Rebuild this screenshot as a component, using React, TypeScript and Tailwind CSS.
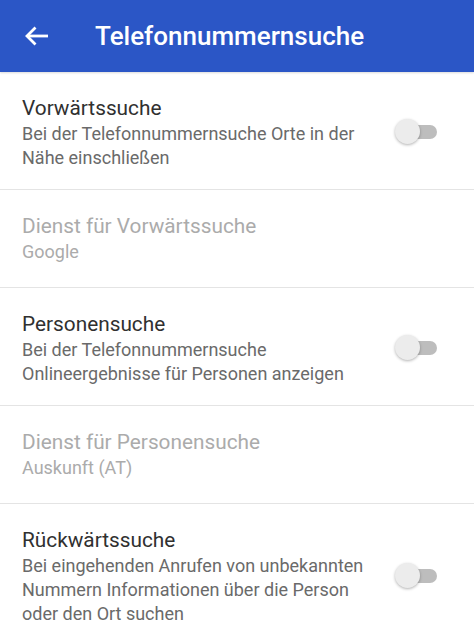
import React from "react";

function Toggle() {
  return (
    <div className="relative w-[42px] h-[26px] shrink-0 flex items-center">
      <div className="absolute left-[4px] right-0 h-[14px] rounded-full bg-[#bdbdbd]" />
      <div className="absolute left-0 top-0 w-[25px] h-[25px] rounded-full bg-[#ececec] shadow-[0_1px_3px_rgba(0,0,0,0.3)]" />
    </div>
  );
}

type ItemProps = {
  title: string;
  sub: React.ReactNode;
  disabled?: boolean;
  toggle?: boolean;
  pb: string;
};

function Item({ title, sub, disabled, toggle, pb }: ItemProps) {
  return (
    <div className={`flex items-center pl-[22px] pr-[37px] pt-[22px] ${pb}`}>
      <div className="flex-1 min-w-0">
        <div
          className={`text-[20.8px] leading-[28px] ${disabled ? "text-[#ababab]" : "text-[#303030]"}`}
        >
          {title}
        </div>
        <div
          className={`text-[18px] leading-[24px] ${disabled ? "text-[#ababab]" : "text-[#6a6a6a]"}`}
        >
          {sub}
        </div>
      </div>
      {toggle ? (
        <div className="ml-[22px]">
          <Toggle />
        </div>
      ) : (
        <div className="ml-[22px] w-[42px]" />
      )}
    </div>
  );
}

function Divider() {
  return <div className="h-[1px] bg-[#e4e4e4]" />;
}

export default function App() {
  return (
    <div
      className="w-[474px] h-[634px] bg-white overflow-hidden"
      style={{ fontFamily: "Roboto, 'Noto Sans', sans-serif" }}
    >
      <div className="h-[72px] bg-[#2b56c6] flex items-center shadow-[0_1px_2px_rgba(0,0,0,0.15)]">
        <svg width="24" height="20" viewBox="0 0 24 20" className="ml-[25px]" fill="none">
          <path d="M23 10H2" stroke="white" strokeWidth="2.8" />
          <path d="M10.5 1.5L2 10l8.5 8.5" stroke="white" strokeWidth="2.8" />
        </svg>
        <div className="ml-[46px] text-white text-[26px] font-medium leading-none">
          Telefonnummernsuche
        </div>
      </div>
      <Item
        title="Vorwärtssuche"
        sub="Bei der Telefonnummernsuche Orte in der Nähe einschließen"
        toggle
        pb="pb-[19px]"
      />
      <Divider />
      <Item title="Dienst für Vorwärtssuche" sub="Google" disabled pb="pb-[23px]" />
      <Divider />
      <Item
        title="Personensuche"
        sub="Bei der Telefonnummernsuche Onlineergebnisse für Personen anzeigen"
        toggle
        pb="pb-[19px]"
      />
      <Divider />
      <Item title="Dienst für Personensuche" sub="Auskunft (AT)" disabled pb="pb-[23px]" />
      <Divider />
      <Item
        title="Rückwärtssuche"
        sub="Bei eingehenden Anrufen von unbekannten Nummern Informationen über die Person oder den Ort suchen"
        toggle
        pb="pb-[19px]"
      />
    </div>
  );
}
